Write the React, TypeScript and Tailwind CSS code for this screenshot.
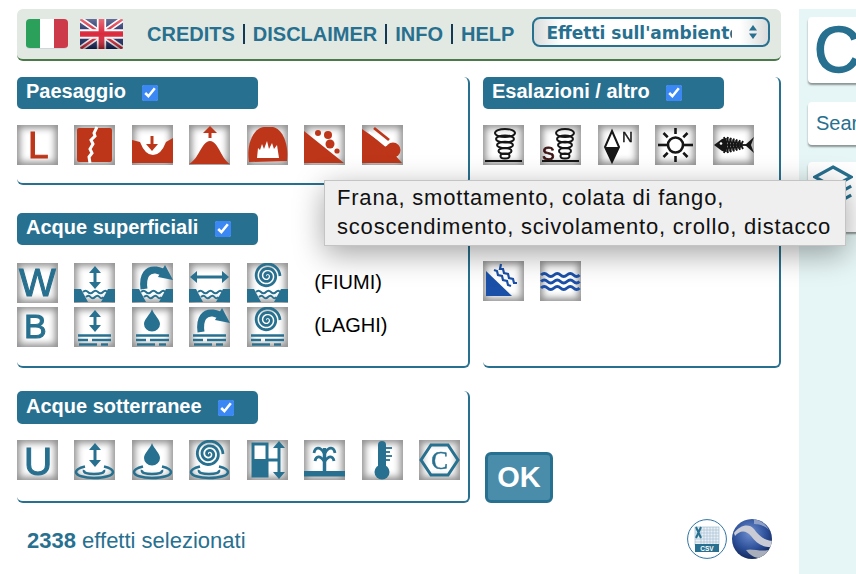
import React from 'react';

const TEAL = '#27708f';
const RED = '#bd3619';
const DARK = '#161616';
const BLUE = '#1a50a8';

function spiral(cx: number, cy: number, r: number, turns: number) {
  let d = '';
  for (let i = 0; i <= 90; i++) {
    const t = i / 90;
    const a = t * turns * Math.PI * 2;
    d += `${i ? 'L' : 'M'}${(cx + r * t * Math.cos(a)).toFixed(2)} ${(cy + r * t * Math.sin(a)).toFixed(2)}`;
  }
  return d;
}

function Tile({ children }: { children: React.ReactNode }) {
  return (
    <div className="w-[41px] h-10 shrink-0 bg-white shadow-[inset_0_0_7px_3px_#8f8f8f] overflow-hidden">
      <svg viewBox="0 0 41 40" className="block w-full h-full blur-[0.3px]">{children}</svg>
    </div>
  );
}

function VArrow({ x, y1, y2, c = TEAL, both = true }: { x: number; y1: number; y2: number; c?: string; both?: boolean }) {
  return (
    <g fill={c}>
      <line x1={x} x2={x} y1={y1 + 3} y2={y2 - 3} stroke={c} strokeWidth="3" />
      <polygon points={`${x},${y2} ${x - 6},${y2 - 7} ${x + 6},${y2 - 7}`} />
      {both && <polygon points={`${x},${y1} ${x - 6},${y1 + 7} ${x + 6},${y1 + 7}`} />}
    </g>
  );
}

function Drop({ cx, top, s = 1 }: { cx: number; top: number; s?: number }) {
  return <path d={`M${cx} ${top} C${cx + 2 * s} ${top + 6 * s} ${cx + 8 * s} ${top + 10 * s} ${cx + 8 * s} ${top + 15 * s} A${8 * s} ${7.5 * s} 0 0 1 ${cx - 8 * s} ${top + 15 * s} C${cx - 8 * s} ${top + 10 * s} ${cx - 2 * s} ${top + 6 * s} ${cx} ${top} Z`} fill={TEAL} />;
}

function Curved({ dy = 0 }: { dy?: number }) {
  return (
    <g transform={`translate(0 ${dy})`}>
      <path d="M12 26 C10 12 16 6 24 7 Q30 8 33 11" fill="none" stroke={TEAL} strokeWidth="7" />
      <polygon points="33,2 41,17 26,14" fill={TEAL} />
    </g>
  );
}

function River() {
  return (
    <g>
      <polygon points="0,26 7,26 14,39 0,39" fill={TEAL} />
      <polygon points="41,26 34,26 27,39 41,39" fill={TEAL} />
      <path d="M9 29 q2.500 -2.500 5 0 t5 0 t5 0 t5 0 t4 0" fill="none" stroke={TEAL} strokeWidth="2" />
      <path d="M12 34 q2.500 -2.500 4.500 0 t4.500 0 t4.500 0 t4 0" fill="none" stroke={TEAL} strokeWidth="2" />
    </g>
  );
}

function Lake() {
  return (
    <g stroke={TEAL} strokeWidth="2.400">
      <line x1="4" x2="37" y1="28.500" y2="28.500" />
      <line x1="4" x2="14" y1="33" y2="33" />
      <line x1="18" x2="37" y1="33" y2="33" />
      <line x1="5" x2="23" y1="37.500" y2="37.500" />
      <line x1="27" x2="34" y1="37.500" y2="37.500" />
    </g>
  );
}

function Ground() {
  return (
    <g fill="none" stroke={TEAL} strokeWidth="2.500">
      <path d="M11 26.500 C5 28 2 30 2 32 C2 35.500 10 38 20 38 C31 38 39 35.500 39 32 C39 30 36 28 30 26.500" />
      <path d="M10 30 C9 33 14 34 20 34 C26 34 31 33 30 30" />
    </g>
  );
}

function Letter({ ch, x, y, size, c, sw = 1 }: { ch: string; x: number; y: number; size: number; c: string; sw?: number }) {
  return <text x={x} y={y} fontSize={size} fill={c} stroke={c} strokeWidth={sw} fontFamily="'Liberation Sans', Arial, sans-serif">{ch}</text>;
}

function Tornado({ withS = false }: { withS?: boolean }) {
  return (
    <g>
      <g fill="none" stroke={DARK} strokeWidth="2" transform={withS ? 'translate(3 0)' : undefined}>
        <ellipse cx="22" cy="8" rx={withS ? 9 : 10} ry="4" />
        <ellipse cx="22" cy="14" rx={withS ? 8 : 9} ry="3.500" />
        <ellipse cx="22" cy="20" rx={withS ? 7 : 8} ry="3.200" />
        <ellipse cx="22" cy="26" rx={withS ? 6 : 6.5} ry="3" />
        <ellipse cx="22" cy="31" rx="4.500" ry="2.500" />
      </g>
      <line x1="2" x2="39" y1="36" y2="36" stroke={DARK} strokeWidth="2.200" />
      {withS && <Letter ch="S" x={2} y={35} size={19} c="#3a1212" sw={0.8} />}
    </g>
  );
}

function Ribs() {
  const xs = [13, 16, 19, 22, 25, 28];
  return (
    <g stroke={DARK} strokeWidth="1.800">
      {xs.map((x, i) => {
        const h = 8 - i * 0.8;
        return <line key={x} x1={x - 2} y1={20 - h} x2={x + 2} y2={20 + h} />;
      })}
      {xs.map((x, i) => {
        const h = 8 - i * 0.8;
        return <line key={x + 'b'} x1={x + 2} y1={20 - h} x2={x - 2} y2={20 + h} />;
      })}
    </g>
  );
}

const paesaggio = [
  <Letter ch="L" x={11} y={33} size={37} c={RED} />,
  <g>
    <rect x="3" y="3" width="35" height="34" rx="2" fill={RED} />
    <polyline points="23,2 20,8 21,11 17,15 19,19 16,24 18,28 15,32 16,38" fill="none" stroke="#fff" strokeWidth="3" />
  </g>,
  <g>
    <path d="M0 15 L8 17 Q13 30 21 30 Q29 30 34 17 L41 13 V38 H0 Z" fill={RED} />
    <VArrow x={20} y1={8} y2={26} c={RED} both={false} />
  </g>,
  <g>
    <path d="M0 39 C10 34 12 17 21 16 C30 17 32 34 41 39 Z" fill={RED} />
    <polygon points="21,1 14,8 28,8" fill={RED} />
    <line x1="21" x2="21" y1="6" y2="13" stroke={RED} strokeWidth="3" />
  </g>,
  <g>
    <path d="M2 37 C-1 20 6 3 17 2 L26 2 C36 4 42 20 40 36 Z" fill={RED} />
    <polygon points="10,33 11,23 13,25 15,19 17,24 20,16 22,24 25,18 27,24 30,20 32,33" fill="#fff" />
  </g>,
  <g fill={RED}>
    <polygon points="0,6 40,38 0,38" />
    <circle cx="14" cy="8" r="3" />
    <circle cx="24" cy="10" r="4" />
    <circle cx="26" cy="19" r="4.500" />
    <circle cx="33" cy="26" r="2.600" />
  </g>,
  <g>
    <polygon points="0,4 26,22 40,38 0,38" fill={RED} />
    <circle cx="31" cy="25" r="7.500" fill={RED} />
    <line x1="12" y1="3" x2="27" y2="15" stroke={RED} strokeWidth="2.800" />
    <line x1="7" y1="7" x2="24" y2="21" stroke="#fff" strokeWidth="2" />
  </g>,
];

const esalazioni = [
  <Tornado />,
  <Tornado withS />,
  <g>
    <polygon points="14,6 21,22 14,37 7,22" fill="#fff" stroke={DARK} strokeWidth="2" />
    <polygon points="7,22 21,22 14,37" fill={DARK} />
    <Letter ch="N" x={24} y={17} size={15} c={DARK} sw={0.4} />
  </g>,
  <g stroke={DARK} strokeWidth="2.600" fill="none">
    <circle cx="20.500" cy="20" r="7.500" />
    {[45, 135, 225, 315, 0, 180].map((a) => (
      <line key={a} x1="20.500" y1="9" x2="20.500" y2="3" transform={`rotate(${a} 20.500 20)`} />
    ))}
    <line x1="3" x2="12" y1="20" y2="20" />
    <line x1="29" x2="38" y1="20" y2="20" />
  </g>,
  <g>
    <path d="M1 20 L9 14 L13 13 L13 27 L9 26 Z" fill={DARK} />
    <circle cx="8" cy="18.500" r="1.300" fill="#fff" />
    <line x1="12" x2="35" y1="20" y2="20" stroke={DARK} strokeWidth="1.800" />
    <Ribs />
    <path d="M32 20 L41 12 L38 20 L41 28 Z" fill={DARK} />
  </g>,
];

const fiumi = [
  <Letter ch="W" x={2} y={33} size={39} c={TEAL} />,
  <g><VArrow x={21} y1={3} y2={26} /><River /></g>,
  <g><Curved /><River /></g>,
  <g>
    <line x1="6" x2="35" y1="14" y2="14" stroke={TEAL} strokeWidth="3" />
    <polygon points="1,14 8,8 8,20" fill={TEAL} />
    <polygon points="40,14 33,8 33,20" fill={TEAL} />
    <River />
  </g>,
  <g><path d={spiral(20, 13, 13, 3)} fill="none" stroke={TEAL} strokeWidth="2.800" /><River /></g>,
];

const laghi = [
  <Letter ch="B" x={7} y={31} size={34} c={TEAL} />,
  <g><VArrow x={21} y1={3} y2={25} /><Lake /></g>,
  <g><Drop cx={20} top={2} /><Lake /></g>,
  <g><Curved dy={-1} /><Lake /></g>,
  <g><path d={spiral(20, 13, 13, 3)} fill="none" stroke={TEAL} strokeWidth="2.800" /><Lake /></g>,
];

const sotterranee = [
  <Letter ch="U" x={7} y={35} size={39} c={TEAL} />,
  <g><VArrow x={21} y1={3} y2={27} /><Ground /></g>,
  <g><Drop cx={20} top={3} /><Ground /></g>,
  <g><path d={spiral(20, 14, 14, 3)} fill="none" stroke={TEAL} strokeWidth="2.800" /><Ground /></g>,
  <g>
    <rect x="6" y="4" width="14" height="32" fill="#fff" stroke={TEAL} strokeWidth="3" />
    <rect x="6" y="19" width="14" height="17" fill={TEAL} />
    <line x1="20" x2="31" y1="20" y2="20" stroke={TEAL} strokeWidth="3" />
    <VArrow x={32} y1={1} y2={39} />
  </g>,
  <g>
    <rect x="0" y="31" width="41" height="5.500" fill={TEAL} />
    <line x1="20.500" x2="20.500" y1="8" y2="31" stroke={TEAL} strokeWidth="3.500" />
    <path d="M20 13 C16 6 11 7 10 13 M21 13 C25 6 30 7 31 13 M20 21 C16 15 12 16 11 21 M21 21 C25 15 29 16 30 21" fill="none" stroke={TEAL} strokeWidth="2.800" />
  </g>,
  <g>
    <rect x="16" y="1" width="8" height="30" rx="4" fill={TEAL} />
    <circle cx="20" cy="32" r="7.500" fill={TEAL} />
    <g stroke={TEAL} strokeWidth="1.800">
      <line x1="24" x2="30" y1="8" y2="8" />
      <line x1="24" x2="28" y1="12" y2="12" />
      <line x1="24" x2="30" y1="16" y2="16" />
      <line x1="24" x2="28" y1="20" y2="20" />
    </g>
  </g>,
  <g>
    <polygon points="2,20 12,5 29,5 39,20 29,35 12,35" fill="none" stroke={TEAL} strokeWidth="3" />
    <text x="20.500" y="29" textAnchor="middle" fontSize="25" fill={TEAL} stroke={TEAL} strokeWidth="0.500" fontFamily="'Liberation Serif', serif">C</text>
  </g>,
];

const marine = [
  <g>
    <polygon points="3,10 29,35 3,35" fill={BLUE} />
    <g fill="none" stroke={BLUE} strokeWidth="2.200">
      <path d="M18 3 l-1 5 l3 0 l1 4 l4 1 l1 4 l4 1 l1 4 l3 0" />
      <path d="M11 9 l3 1 l1 4 l4 1 l1 4 l4 1 l1 4 l3 1" />
    </g>
  </g>,
  <g fill="none" stroke={BLUE} strokeWidth="3">
    <path d="M1 14 q3.300 -3 6.500 0 t6.500 0 t6.500 0 t6.500 0 t6.500 0 t6 0" />
    <path d="M1 20.500 q3.300 -3 6.500 0 t6.500 0 t6.500 0 t6.500 0 t6.500 0 t6 0" />
    <path d="M1 27 q3.300 -3 6.500 0 t6.500 0 t6.500 0 t6.500 0 t6.500 0 t6 0" />
  </g>,
];

function Icons({ items }: { items: React.ReactNode[] }) {
  return (
    <>
      {items.map((it, i) => (
        <Tile key={i}>{it}</Tile>
      ))}
    </>
  );
}

function Title({ text, h = 'h-8', gap = 'ml-4' }: { text: string; h?: string; gap?: string }) {
  return (
    <div className={`w-[241px] ${h} bg-[#27708f] rounded-[5px] pl-[9px] flex items-center`}>
      <span className="pb-1 text-[20px] font-bold text-white leading-none">{text}</span>
      <input type="checkbox" defaultChecked className={`${gap} w-4 h-4 accent-[#3b88f5]`} />
    </div>
  );
}

function ItalyFlag() {
  return (
    <div className="w-[42px] h-[30px] rounded-[4px] overflow-hidden flex border-b border-gray-300">
      <div className="flex-1 bg-[#2aa05a]" />
      <div className="flex-1 bg-white" />
      <div className="flex-1 bg-[#cd3a4a]" />
    </div>
  );
}

function UkFlag() {
  return (
    <svg viewBox="0 0 60 42" preserveAspectRatio="none" className="w-[43px] h-[30px] rounded-[2px]">
      <defs>
        <linearGradient id="gloss" x1="0" y1="0" x2="0" y2="1">
          <stop offset="0" stopColor="#fff" stopOpacity="0.35" />
          <stop offset="0.5" stopColor="#fff" stopOpacity="0.05" />
          <stop offset="1" stopColor="#000" stopOpacity="0.4" />
        </linearGradient>
      </defs>
      <rect width="60" height="42" fill="#14225f" />
      <path d="M0 0L60 42M60 0L0 42" stroke="#fff" strokeWidth="8" />
      <path d="M0 0L60 42M60 0L0 42" stroke="#d81e32" strokeWidth="3.500" />
      <path d="M30 0V42M0 21H60" stroke="#fff" strokeWidth="13" />
      <path d="M30 0V42M0 21H60" stroke="#d81e32" strokeWidth="8" />
      <rect width="60" height="42" fill="url(#gloss)" />
    </svg>
  );
}

function CsvIcon() {
  const cols = [14, 17, 20, 23, 26, 29];
  const rows = [11, 14, 17, 20, 23];
  return (
    <svg viewBox="0 0 40 40" className="w-10 h-10">
      <circle cx="20" cy="20" r="19.400" fill="#fff" stroke="#2f74a5" strokeWidth="1" />
      <rect x="8" y="8" width="24" height="18" fill="#eaf1f6" stroke="#8fb2c9" strokeWidth="0.600" />
      <g stroke="#9dbbd0" strokeWidth="0.600">
        {cols.map((x) => <line key={x} x1={x} x2={x} y1="8" y2="26" />)}
        {rows.map((y) => <line key={y} y1={y} y2={y} x1="8" x2="32" />)}
      </g>
      <path d="M9 8L14 19M14 8L9 19" stroke={TEAL} strokeWidth="2" />
      <rect x="8" y="25" width="24" height="8" fill={TEAL} />
      <text x="20" y="31.500" textAnchor="middle" fontSize="6.500" fontWeight="700" fill="#fff" fontFamily="'Liberation Sans', sans-serif">CSV</text>
    </svg>
  );
}

function EarthIcon() {
  return (
    <svg viewBox="0 0 40 40" className="w-10 h-10">
      <defs>
        <radialGradient id="earth" cx="0.45" cy="0.35" r="0.75">
          <stop offset="0" stopColor="#6f8fd0" />
          <stop offset="0.55" stopColor="#2c4f98" />
          <stop offset="1" stopColor="#0c1a45" />
        </radialGradient>
        <clipPath id="ball"><circle cx="20" cy="20" r="20" /></clipPath>
      </defs>
      <circle cx="20" cy="20" r="20" fill="url(#earth)" />
      <g clipPath="url(#ball)">
        <path d="M2 14 C8 6 17 4 22 10 C27 17 33 22 41 22 L41 28 C31 29 24 24 19 17 C14 11 8 11 3 17 Z" fill="#c9ccd4" />
        <path d="M14 31 C20 29 28 33 36 31 L34 38 C27 41 19 38 14 31 Z" fill="#a9aebb" />
        <path d="M22 0 C28 1 34 5 37 11 C33 7 27 5 22 5 Z" fill="#8ea0c6" />
      </g>
    </svg>
  );
}

function LayersGlyph() {
  return (
    <svg viewBox="0 0 44 50" className="w-10 h-[46px]">
      <g fill="none" stroke={TEAL} strokeWidth="3.500">
        <polygon points="22,3 42,14 22,25 2,14" />
        <path d="M2 24 L22 35 L42 24" />
        <path d="M2 34 L22 45 L42 34" />
      </g>
    </svg>
  );
}

export default function App() {
  return (
    <div className="relative w-[856px] h-[574px] overflow-hidden bg-white flex font-['Liberation_Sans',Arial,sans-serif] text-[#27708f]">
      <div className="w-[781px] shrink-0 pl-[17px] pt-[9px]">
        {/* top bar */}
        <header className="h-[52px] bg-[#e2e8e2] border-b-2 border-[#4a7a4a] rounded-[6px] flex items-center pl-[9px]">
          <ItalyFlag />
          <div className="ml-3"><UkFlag /></div>
          <nav className="ml-6 flex items-center text-[20px] font-bold leading-none">
            <span>CREDITS</span>
            <span className="w-0.5 h-5 bg-[#123a55] mx-2" />
            <span>DISCLAIMER</span>
            <span className="w-0.5 h-5 bg-[#123a55] mx-2" />
            <span>INFO</span>
            <span className="w-0.5 h-5 bg-[#123a55] mx-2" />
            <span>HELP</span>
          </nav>
          <div className="ml-[18px] w-[238px] h-[30px] -mt-[4px] border-2 border-[#27708f] rounded-[8px] bg-[linear-gradient(90deg,#d9dcdc_0%,#ffffff_12%,#ffffff_88%,#d9dcdc_100%)] flex items-center pl-3 pr-2">
            <div className="w-[186px] overflow-hidden whitespace-nowrap font-['DejaVu_Sans',sans-serif] font-bold text-[17px] leading-none pt-0.5">Effetti sull'ambiente</div>
            <svg viewBox="0 0 10 16" className="ml-auto w-2.5 h-4 mr-0.5">
              <polygon points="5,1 9,6.500 1,6.500" fill={TEAL} />
              <polygon points="5,15 9,9.500 1,9.500" fill={TEAL} />
            </svg>
          </div>
        </header>

        <div className="mt-4 grid grid-cols-[453px_298px] gap-x-[13px]">
          <div className="flex flex-col">
            <section className="border-r-2 border-b-2 border-[#27708f] rounded-b-md rounded-tr-md pb-[18px]">
              <Title text="Paesaggio" />
              <div className="mt-4 flex gap-[16.45px]"><Icons items={paesaggio} /></div>
            </section>
            <section className="mt-7 border-r-2 border-b-2 border-[#27708f] rounded-b-md rounded-tr-md pb-[19px]">
              <Title text="Acque superficiali" gap="ml-[17px]" />
              <div className="mt-[18px] flex items-center gap-[16.45px]">
                <Icons items={fiumi} />
                <span className="ml-2.5 pb-[2px] text-[20px] text-black leading-none">(FIUMI)</span>
              </div>
              <div className="mt-1 flex items-center gap-[16.45px]">
                <Icons items={laghi} />
                <span className="ml-2.5 pb-1 text-[20px] text-black leading-none">(LAGHI)</span>
              </div>
            </section>
            <section className="mt-[23px] border-r-2 border-b-2 border-[#27708f] rounded-b-md rounded-tr-md pb-[21px]">
              <Title text="Acque sotterranee" h="h-[33px]" gap="ml-4" />
              <div className="mt-4 flex gap-[16.45px]"><Icons items={sotterranee} /></div>
            </section>
          </div>

          <div className="flex flex-col">
            <section className="h-[291px] border-r-2 border-b-2 border-[#27708f] rounded-b-md rounded-tr-md">
              <Title text="Esalazioni / altro" />
              <div className="mt-4 flex gap-[16.45px]"><Icons items={esalazioni} /></div>
              <div className="mt-[96px] flex gap-[16.45px]"><Icons items={marine} /></div>
            </section>
            <button className="mt-[84px] ml-0.5 w-[68px] h-[51px] rounded-[6px] border-[3px] border-[#27708f] bg-[#4a8dab] text-white font-bold text-[29px] leading-none">OK</button>
          </div>
        </div>

        <footer className="mt-4 h-10 flex items-center justify-between pl-2.5 pr-[9px]">
          <p className="pt-[4px] text-[22px] leading-none"><b>2338</b> effetti selezionati</p>
          <div className="flex gap-[5px]">
            <CsvIcon />
            <EarthIcon />
          </div>
        </footer>
      </div>

      {/* right sidebar, cut off by the window */}
      <aside className="ml-[18px] mt-[9px] flex-1 bg-[#e6f5f5] pl-[9px] pt-2 overflow-hidden">
        <div className="w-[120px] h-[66px] bg-white rounded-[4px] shadow-[0_2px_2px_rgba(0,0,0,0.4)] pl-[6px] flex items-center text-[64px] leading-none [-webkit-text-stroke:1.5px_#27708f]">C</div>
        <div className="mt-[19px] w-[120px] h-[43px] bg-white rounded-[4px] shadow-[0_2px_2px_rgba(0,0,0,0.4)] pl-2 pb-[2px] flex items-center text-[20px] leading-none whitespace-nowrap">Search</div>
        <div className="mt-[17px] w-[120px] h-[70px] bg-white rounded-[4px] shadow-[0_2px_2px_rgba(0,0,0,0.4)] pl-[5px] pt-[2px]"><LayersGlyph /></div>
      </aside>

      {/* tooltip over the icon grid */}
      <div className="absolute left-[324px] top-[180px] w-[522px] h-[66px] bg-[#efefef] border border-[#c4c4c4] shadow-[0_8px_30px_rgba(0,0,0,0.36)] pl-3 pt-[2px] text-[22px] leading-[29px] text-[#111] whitespace-nowrap tracking-[0.8px]">
        Frana, smottamento, colata di fango,<br />scoscendimento, scivolamento, crollo, distacco
      </div>
    </div>
  );
}
